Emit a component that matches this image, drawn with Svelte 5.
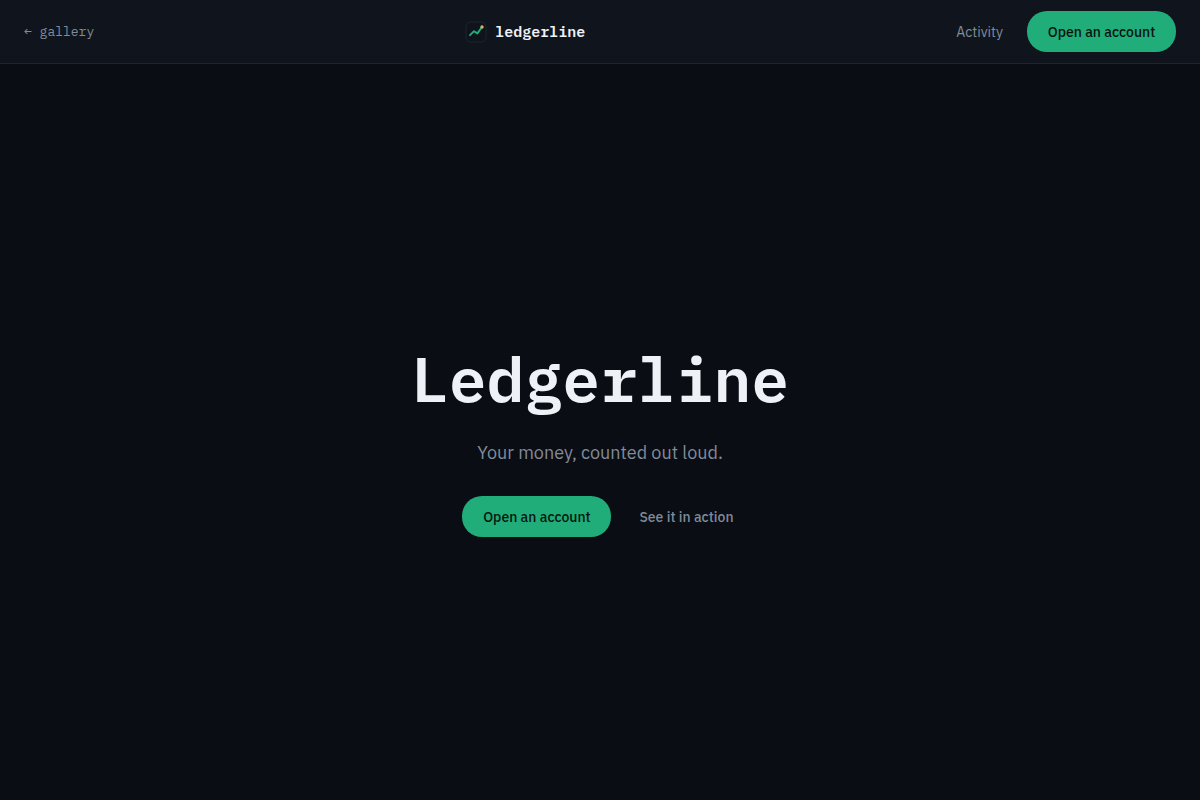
<script lang="ts">
  const name = "Ledgerline";
  const tagline = "Your money, counted out loud.";
  const cta = "Open an account";
</script>

<style>
  :global(body) {
    margin: 0;
    background-color: #0a0d14;
  }
  div.page {
    display: flex;
    flex-direction: column;
    min-height: 100vh;
    color: #eef1f6;
    font-family: "IBM Plex Sans", Roboto, sans-serif;
  }
  a {
    color: #808b99;
    text-decoration: none;
  }
  header {
    display: flex;
    justify-content: space-between;
    align-items: center;
    box-sizing: border-box;
    height: 64px;
    padding: 0 24px;
    border-bottom: 1px solid #1f242d;
    background-color: #10141c;
  }
  a.back,
  a.brand,
  h1 {
    font-family: "IBM Plex Mono", "Liberation Mono", monospace;
  }
  a.back {
    font-size: 13px;
  }
  a.brand {
    display: flex;
    align-items: center;
    gap: 8px;
    color: #eef1f6;
    font-size: 15px;
    font-weight: 600;
  }
  a.brand svg {
    width: 22px;
    height: 22px;
  }
  nav {
    display: flex;
    align-items: center;
    gap: 24px;
    font-size: 14px;
  }
  button {
    box-sizing: border-box;
    min-width: 149px;
    height: 41px;
    padding: 1px 20px 0;
    border: 0;
    border-radius: 20px;
    background-color: #20ad79;
    color: #07150f;
    font-family: inherit;
    font-size: 14px;
    font-weight: 500;
    cursor: pointer;
  }
  main {
    flex: 1;
    display: flex;
    flex-direction: column;
    justify-content: center;
    align-items: center;
    text-align: center;
  }
  h1 {
    margin: 0;
    font-size: 63px;
    font-weight: 600;
    line-height: 100px;
  }
  p {
    margin: 11px 0 29px;
    color: #808b99;
    font-size: 18px;
    line-height: 28px;
  }
  div.actions {
    display: flex;
    align-items: center;
    gap: 24px;
  }
  div.actions a {
    padding: 1px 4px 0;
    font-size: 14px;
    font-weight: 500;
  }
</style>

<div class="page">
  <header>
    <a class="back" href="#gallery">← gallery</a>

    <a class="brand" href="#top">
      <svg viewBox="0 0 22 22" fill="none" aria-hidden="true">
        <rect x="1" y="1" width="20" height="20" rx="5" fill="#0f131b" stroke="#1f242d" />
        <path d="M5 14.2 L9 10.2 L12.4 12.4 L17 6" stroke="#20ad79" stroke-width="1.9" stroke-linecap="round" stroke-linejoin="round" />
        <circle cx="17" cy="6" r="1.7" fill="#d9b36a" />
      </svg>
      <span>{name.toLowerCase()}</span>
    </a>

    <nav>
      <a href="#activity">Activity</a>
      <button type="button">{cta}</button>
    </nav>
  </header>

  <main>
    <h1>{name}</h1>
    <p>{tagline}</p>
    <div class="actions">
      <button type="button">{cta}</button>
      <a href="#activity">See it in action</a>
    </div>
  </main>
</div>
